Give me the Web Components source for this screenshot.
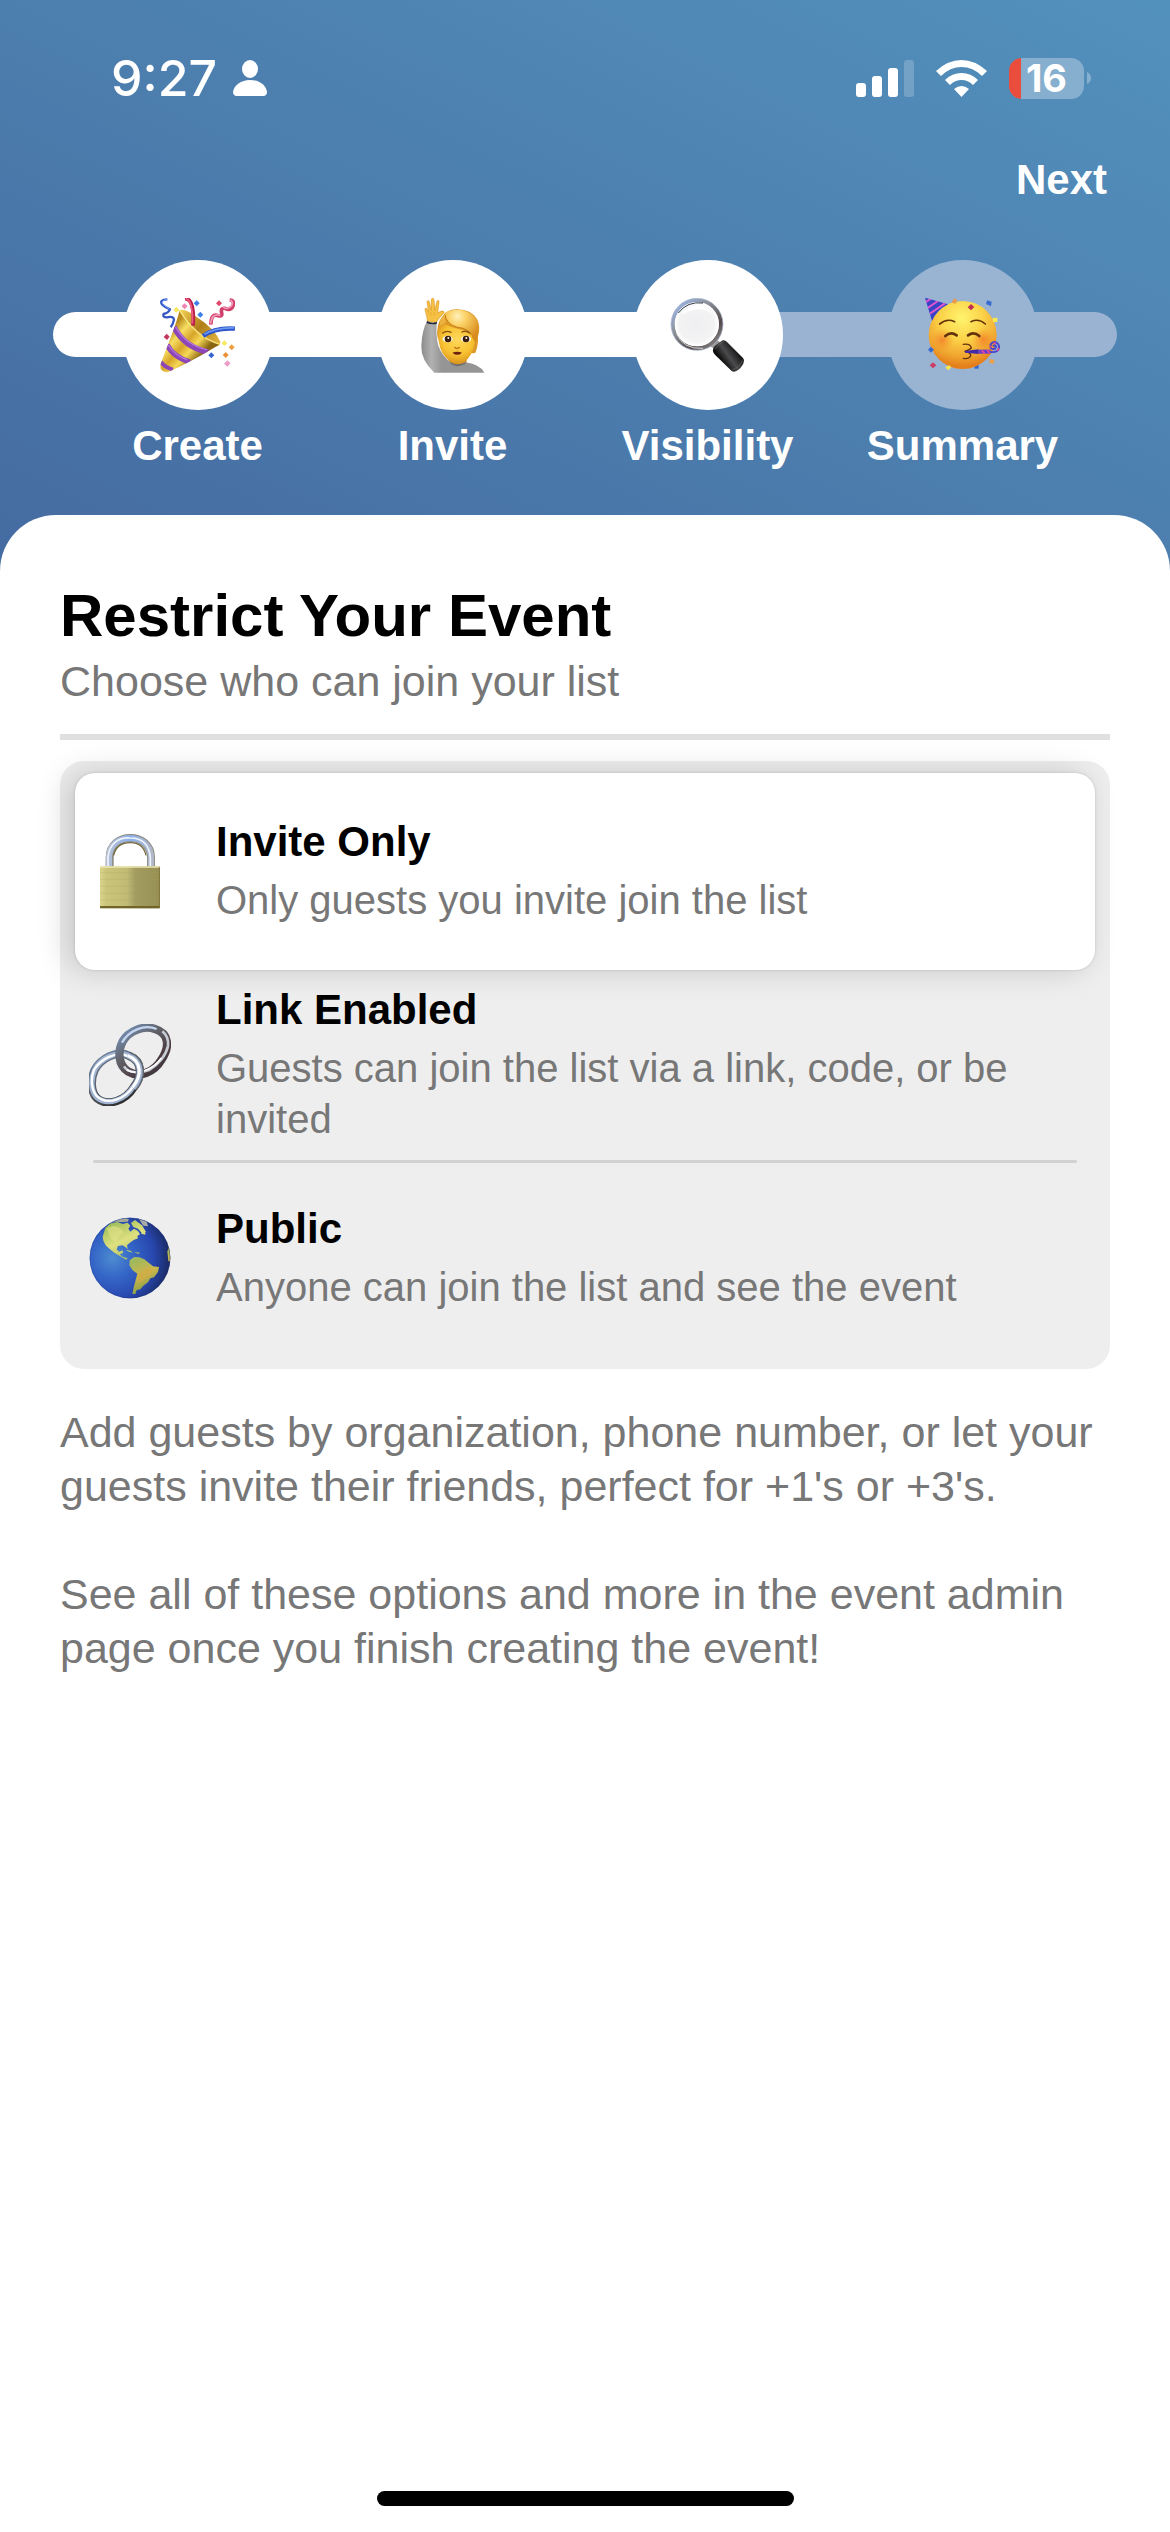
<!DOCTYPE html>
<html lang="en">
<head>
<meta charset="utf-8">
<meta name="viewport" content="width=device-width, initial-scale=1">
<title>Restrict Your Event</title>
<style>
  html, body { margin: 0; background: #fff; }
  body { font-family: "Liberation Sans", Arial, sans-serif; }
</style>
</head>
<body>
<event-page>
  <status-bar slot="header"></status-bar>
  <top-nav slot="header">Next</top-nav>
  <progress-steps slot="header"></progress-steps>
  <section-heading>
    Restrict Your Event
    <span slot="subtitle">Choose who can join your list</span>
  </section-heading>
  <visibility-options></visibility-options>
  <help-text>
    <p>Add guests by organization, phone number, or let your guests invite their friends, perfect for +1's or +3's.</p>
    <p>See all of these options and more in the event admin page once you finish creating the event!</p>
  </help-text>
</event-page>

<script>
const define = (name, html, setup) => customElements.define(name, class extends HTMLElement {
  constructor() {
    super();
    this.attachShadow({ mode: 'open' }).innerHTML = html;
  }
  connectedCallback() { if (setup) setup(this); }
});

const emoji = {
  party: `<svg viewBox="123 145 225 225">
    <defs>
      <linearGradient id="cone" x1="145" y1="250" x2="235" y2="330" gradientUnits="userSpaceOnUse">
        <stop offset="0" stop-color="#b98a1c"/><stop offset=".25" stop-color="#f7de62"/><stop offset=".5" stop-color="#d7a42a"/><stop offset=".72" stop-color="#f6d956"/><stop offset="1" stop-color="#8a6412"/>
      </linearGradient>
      <linearGradient id="in" x1="180" y1="190" x2="300" y2="280" gradientUnits="userSpaceOnUse">
        <stop offset="0" stop-color="#f2cf52"/><stop offset=".5" stop-color="#b07f1a"/><stop offset="1" stop-color="#e2b540"/>
      </linearGradient>
      <clipPath id="c"><path d="M182 182C168 236 140 300 124 346Q122 366 146 368C190 350 250 316 303 284Q230 262 182 182Z"/></clipPath>
    </defs>
    <path d="M182 182Q196 174 230 200Q288 238 304 276Q304 292 284 289Q230 270 192 218Z" fill="url(#in)"/>
    <path d="M182 182C168 236 140 300 124 346Q122 366 146 368C190 350 250 316 303 284Q230 262 182 182Z" fill="url(#cone)"/>
    <g clip-path="url(#c)" fill="none" stroke="#8d46b8">
      <path d="M165 232Q195 292 268 308" stroke-width="17"/>
      <path d="M144 285Q162 322 214 338" stroke-width="16"/>
      <path d="M125 336Q138 354 162 360" stroke-width="12"/>
      <path d="M170 232Q200 286 264 300" stroke="#b87be0" stroke-width="4"/>
      <path d="M148 286Q168 318 204 330" stroke="#b87be0" stroke-width="4"/>
    </g>
    <path d="M182 182Q230 262 303 284" fill="none" stroke="#f9e783" stroke-width="4"/>
    <path d="M198 148Q210 146 216 160Q226 185 222 228" fill="none" stroke="#b81f48" stroke-width="11"/>
    <path d="M200 147Q213 149 217 172Q222 190 220 222" fill="none" stroke="#ef5c80" stroke-width="5"/>
    <path d="M252 259Q288 233 348 237" fill="none" stroke="#2e56c8" stroke-width="13"/>
    <path d="M256 254Q292 233 346 235" fill="none" stroke="#6b97f4" stroke-width="5"/>
    <path d="M145 149Q120 150 129 164Q139 174 153 179Q149 189 134 193Q130 203 143 203Q164 198 165 210Q163 223 155 233" fill="none" stroke="#3458c6" stroke-width="7" stroke-linejoin="round"/>
    <path d="M145 149Q124 153 131 163Q141 173 151 178" fill="none" stroke="#6f98f2" stroke-width="3"/>
    <path d="M332 151Q349 152 341 171Q334 184 318 176Q304 174 308 190Q311 202 298 198Q275 190 276 225" fill="none" stroke="#d0406b" stroke-width="11" stroke-linejoin="round"/>
    <path d="M334 151Q344 157 338 168Q326 181 312 173M304 197Q278 190 275 222" fill="none" stroke="#f39ab9" stroke-width="5"/>
    <g>
      <path d="m172 172 9 8-9 9-9-8z" fill="#f7e95c"/><path d="m196 161 10 8-9 10-9-9z" fill="#ee85b2"/>
      <path d="m233 152 9 9-9 9-9-9z" fill="#3f7fe8"/><path d="m244 186 9 9-9 9-9-9z" fill="#3f7fe8"/>
      <path d="m300 152 9 9-9 9-9-9z" fill="#dc4a6e"/><path d="m143 252 9 9-8 10-10-9z" fill="#c4375e"/>
      <path d="m316 272 9 9-9 8-8-8z" fill="#f7e95c"/><path d="m338 284 9 9-9 9-9-9z" fill="#eda044"/>
      <path d="m320 307 9 9-9 9-9-9z" fill="#e8913b"/><path d="m277 308 9 9-9 9-9-9z" fill="#3465d2"/>
      <path d="m325 332 10 9-10 10-10-9z" fill="#ee9cc8"/>
    </g></svg>`,
  hand: `<svg viewBox="135 145 225 225">
    <defs>
      <radialGradient id="f" cx="262" cy="270" r="75" gradientUnits="userSpaceOnUse"><stop offset="0" stop-color="#ffd85c"/><stop offset=".6" stop-color="#f8c232"/><stop offset="1" stop-color="#d8901c"/></radialGradient>
      <radialGradient id="h" cx="262" cy="200" r="75" gradientUnits="userSpaceOnUse"><stop offset="0" stop-color="#fff0bc"/><stop offset=".35" stop-color="#fbd267"/><stop offset="1" stop-color="#d98d1d"/></radialGradient>
      <linearGradient id="s" x1="155" y1="280" x2="215" y2="280" gradientUnits="userSpaceOnUse"><stop offset="0" stop-color="#8c8c8c"/><stop offset=".5" stop-color="#b1b1b1"/><stop offset="1" stop-color="#959595"/></linearGradient>
    </defs>
    <path d="M172 214Q172 202 165 181Q164 174 170 176L176 188L171 157Q173 149 178 156L184 182L184 149Q188 141 192 149L194 182L201 154Q207 149 207 157L203 190Q210 184 219 184Q226 187 218 194Q204 209 198 219Z" fill="#f6c044" stroke="#dd9a26" stroke-width="2"/>
    <path d="M182 188L183 198M193 188L192 198" stroke="#e0a12c" stroke-width="2"/>
    <path d="M236 318H290V350H236Z" fill="#d99220"/>
    <path d="M171 214Q186 223 201 216Q196 255 205 288Q216 318 242 338Q262 352 285 338Q328 342 343 369H193Q152 330 154 288Q156 242 171 214Z" fill="url(#s)"/>
    <path d="M171 214Q186 223 201 216L200 222Q184 227 170 220Z" fill="#20283c"/>
    <path d="M240 337Q262 351 288 337L284 344Q262 355 244 344Z" fill="#6e6e6e"/>
    <path d="M214 205Q228 178 262 179Q303 180 321 208Q333 231 324 260Q325 287 318 304Q318 313 305 310L230 290Q197 278 202 242Q204 217 214 205Z" fill="#dd9826"/>
    <path d="M204 245Q208 226 224 224Q260 240 306 246Q318 255 314 280Q309 320 281 337Q262 348 242 336Q212 318 206 275Z" fill="url(#f)"/>
    <path d="M224 190Q229 226 262 233Q296 236 304 256Q308 272 318 278Q332 232 318 207Q294 177 252 181Q233 184 224 190Z" fill="url(#h)"/>
    <path d="M224 193Q229 224 262 233Q294 236 303 255" fill="none" stroke="#c57d17" stroke-width="3"/>
    <path d="M226 192Q208 205 209 229Q222 222 229 217Q222 205 226 192Z" fill="#edb342"/>
    <path d="M218 250Q231 241 243 248M276 247Q288 241 299 250" fill="none" stroke="#87500d" stroke-width="4" stroke-linecap="round"/>
    <ellipse cx="233" cy="268" rx="15" ry="10" fill="#fff"/><ellipse cx="288" cy="268" rx="15" ry="10" fill="#fff"/>
    <circle cx="234" cy="268" r="10" fill="#3b1e0d"/><circle cx="288" cy="268" r="10" fill="#3b1e0d"/>
    <circle cx="235" cy="265" r="3" fill="#fff"/><circle cx="289" cy="265" r="3" fill="#fff"/>
    <path d="M253 292Q261 301 269 292" fill="none" stroke="#c0761a" stroke-width="5"/>
    <path d="M247 309Q262 304 276 309Q262 322 247 309Z" fill="#6d230f"/></svg>`,
  glass: `<svg viewBox="123 145 225 225">
    <defs>
      <linearGradient id="r" x1="140" y1="150" x2="270" y2="300" gradientUnits="userSpaceOnUse"><stop offset="0" stop-color="#9ebcf0"/><stop offset=".35" stop-color="#8d9199"/><stop offset=".7" stop-color="#544a4c"/><stop offset="1" stop-color="#9b9b9b"/></linearGradient>
      <linearGradient id="k" x1="268" y1="330" x2="325" y2="290" gradientUnits="userSpaceOnUse"><stop offset="0" stop-color="#000"/><stop offset=".45" stop-color="#4b4b4d"/><stop offset="1" stop-color="#050505"/></linearGradient>
      <radialGradient id="l"><stop offset="0" stop-color="#efeff1"/><stop offset=".8" stop-color="#f3f3f4"/><stop offset="1" stop-color="#fff"/></radialGradient>
    </defs>
    <path d="M240 290L262 270L274 278L256 296Z" fill="#999"/>
    <circle cx="204" cy="224" r="72" fill="none" stroke="url(#r)" stroke-width="12"/>
    <circle cx="204" cy="224" r="78" fill="none" stroke="#a9b5ce" stroke-width="2"/>
    <circle cx="203" cy="223" r="66" fill="url(#l)"/>
    <path d="M148 190Q175 154 222 160" fill="none" stroke="#333b49" stroke-width="3"/>
    <path d="M142 252Q165 300 222 296" fill="none" stroke="#dadada" stroke-width="3"/>
    <path d="M158 195Q175 168 205 164Q234 168 249 193Q220 169 180 185Z" fill="#fff"/>
    <path d="M252 300Q252 290 281 272Q288 270 294 277L342 325Q350 335 336 353Q320 371 308 364L258 315Q250 306 252 300Z" fill="url(#k)"/>
    <path d="M257 299Q272 279 284 276M308 361Q333 354 341 330" fill="none" stroke="#686868" stroke-width="2"/></svg>`,
  face: `<svg viewBox="138 145 225 225">
    <defs>
      <radialGradient id="y" cx="248" cy="205" r="145" gradientUnits="userSpaceOnUse"><stop offset="0" stop-color="#fff46e"/><stop offset=".45" stop-color="#fbd248"/><stop offset=".8" stop-color="#f0a52f"/><stop offset="1" stop-color="#e57f1c"/></radialGradient>
      <radialGradient id="b"><stop offset="0" stop-color="#f36c26" stop-opacity=".65"/><stop offset="1" stop-color="#f38a26" stop-opacity="0"/></radialGradient>
      <clipPath id="t"><path d="M138 144L207 164Q172 182 159 214Z"/></clipPath>
    </defs>
    <path d="M286 346h13v11h-13z" fill="#376ad0"/>
    <circle cx="251" cy="256" r="102" fill="url(#y)"/>
    <circle cx="190" cy="271" r="35" fill="url(#b)"/><circle cx="313" cy="269" r="35" fill="url(#b)"/>
    <path d="M138 144L207 164Q172 182 159 214Z" fill="#3843c6"/>
    <g clip-path="url(#t)" stroke="#e056cf" stroke-width="6"><path d="M137 160L160 144M140 179L181 151M147 196L202 158"/></g>
    <g fill="none" stroke="#63330b" stroke-linecap="round">
      <path d="M182 223Q203 205 227 216M276 216Q299 205 319 223" stroke-width="5"/>
      <path d="M199 259Q216 244 233 257M267 257Q284 244 301 259" stroke-width="8"/>
      <path d="M253 284Q274 281 277 295Q271 301 257 305Q277 309 275 319Q269 329 253 326" stroke-width="4"/>
    </g>
    <path d="M257 304L299 299V313L258 309Z" fill="#422aaa"/>
    <path d="M299 306H334" stroke="#693bd0" stroke-width="12"/><path d="M308 302l9 9M325 301l7 10" stroke="#e44a94" stroke-width="5"/>
    <path d="M333 307Q362 310 360 289Q354 274 341 278Q330 286 337 297Q350 301 351 290Q347 283 342 290" fill="none" stroke="#4a46cc" stroke-width="6"/>
    <path d="M355 303l5-7M344 280l7 1M334 288l1 6" stroke="#e44a94" stroke-width="5"/>
    <path d="m225 146 10 6-5 10-12-3z" fill="#e99a49"/><path d="m276 163 10 9-10 10-10-9z" fill="#bf3152"/>
    <path d="m324 152 14 4-2 14-15-7z" fill="#386bd2"/><path d="m341 205 14-1v13l-13 1z" fill="#f6e94e"/>
    <path d="m155 291 10 9-9 9-9-9z" fill="#386bd2"/><path d="m162 338 10 9-10 9-10-9z" fill="#cc3d65"/>
    <path d="m199 352 12-5 6 6-10 9z" fill="#f6e94e"/><path d="m333 327 14 4-4 12-13-4z" fill="#e9a04f"/></svg>`,
  lock: `<svg viewBox="27 33 246 246">
    <defs>
      <linearGradient id="m" x1="62" y1="0" x2="240" y2="0" gradientUnits="userSpaceOnUse"><stop offset="0" stop-color="#d9d28b"/><stop offset=".1" stop-color="#cbc57a"/><stop offset=".45" stop-color="#c0ba75"/><stop offset=".58" stop-color="#a39d62"/><stop offset="1" stop-color="#979052"/></linearGradient>
      <linearGradient id="n" x1="80" y1="45" x2="220" y2="60" gradientUnits="userSpaceOnUse"><stop offset="0" stop-color="#bcc2ce"/><stop offset=".5" stop-color="#8fb1e8"/><stop offset="1" stop-color="#b1b8c8"/></linearGradient>
    </defs>
    <path d="M89 142V113C89 34 213 34 213 113V142" fill="none" stroke="#8a877c" stroke-width="24"/>
    <path d="M87 142V112C88 35 212 35 213 112V142" fill="none" stroke="url(#n)" stroke-width="19"/>
    <path d="M84 138V112C88 70 116 52 150 54C184 54 208 72 211 113V138" fill="none" stroke="#edf4ff" stroke-width="5"/>
    <path d="M101 106C108 76 130 68 151 68C174 68 192 79 198 106" fill="none" stroke="#756a3e" stroke-width="4"/>
    <rect x="60" y="139" width="180" height="126" rx="3" fill="url(#m)"/>
    <path d="M60 158H240M60 178H240M60 199H240M60 220H240M60 240H240" stroke="#a69f5e" stroke-opacity=".35" stroke-width="2"/>
    <path d="M61 141H239" stroke="#eee9b4" stroke-width="4"/>
    <path d="M60 258H240V265H60Z" fill="#706629"/><path d="M238 142V264" stroke="#81763d" stroke-width="3"/></svg>`,
  link: `<svg viewBox="27 72 246 246">
    <defs>
      <linearGradient id="a" x1="130" y1="75" x2="260" y2="230" gradientUnits="userSpaceOnUse"><stop offset="0" stop-color="#7795c0"/><stop offset=".35" stop-color="#63656d"/><stop offset=".7" stop-color="#4c3c42"/><stop offset="1" stop-color="#38383c"/></linearGradient>
      <linearGradient id="z" x1="50" y1="165" x2="150" y2="315" gradientUnits="userSpaceOnUse"><stop offset="0" stop-color="#6d7f9a"/><stop offset=".5" stop-color="#585b62"/><stop offset="1" stop-color="#232323"/></linearGradient>
    </defs>
    <g fill="none">
      <path d="M44 210C62 176 111 149 146 167C190 184 187 230 161 262C137 301 84 322 51 295C31 275 32 237 44 210Z" stroke="url(#z)" stroke-width="25"/>
      <path d="M44 209C62 176 111 149 146 167C189 184 186 229 160 260C136 299 84 319 51 293C32 274 32 237 44 209Z" stroke="#a2b6d3" stroke-width="16"/>
      <path d="M42 210C60 178 109 151 146 169C188 184 185 228 160 258C136 297 84 317 52 290C34 272 31 237 42 210Z" stroke="#fff" stroke-width="7"/>
      <path d="M128 124C145 94 190 74 225 87C269 100 269 142 245 178C223 216 178 235 145 215C113 195 113 153 128 124Z" stroke="url(#a)" stroke-width="25"/>
      <path d="M126 128C146 92 192 71 230 87" stroke="#c4d6ef" stroke-width="7"/>
      <path d="M132 199C144 219 178 221 207 210C236 194 258 166 264 138Q267 110 247 94" stroke="#c9cdd6" stroke-width="8"/>
      <path d="M140 210C176 229 222 205 244 174" stroke="#fff" stroke-width="5"/>
      <path d="M146 167C190 184 187 230 161 262" stroke="#62666e" stroke-width="25"/>
      <path d="M143 166C190 184 187 230 159 264" stroke="#a2b6d3" stroke-width="17"/>
      <path d="M143 167C188 184 185 228 158 262" stroke="#fff" stroke-width="9"/>
    </g></svg>`,
  globe: `<svg viewBox="27 653 246 246">
    <defs>
      <radialGradient id="o" cx="98" cy="775" r="178" gradientUnits="userSpaceOnUse"><stop offset="0" stop-color="#4d8cd0"/><stop offset=".35" stop-color="#3465c7"/><stop offset=".7" stop-color="#2847ae"/><stop offset="1" stop-color="#182659"/></radialGradient>
      <linearGradient id="g" x1="80" y1="670" x2="180" y2="880" gradientUnits="userSpaceOnUse"><stop offset="0" stop-color="#96ba53"/><stop offset=".3" stop-color="#dfe080"/><stop offset=".6" stop-color="#9fb85c"/><stop offset=".8" stop-color="#cdb64e"/><stop offset="1" stop-color="#8aa145"/></linearGradient>
      <clipPath id="w"><circle cx="150" cy="776" r="121"/></clipPath>
    </defs>
    <circle cx="150" cy="776" r="121" fill="url(#o)"/>
    <g clip-path="url(#w)" fill="url(#g)">
      <path d="M68 712L76 686L92 672L112 668L128 674L143 670L151 679L145 688L151 697L162 688L174 695L180 705L172 710L174 717L160 723L148 732L141 738L143 750L137 744L127 738L114 740L110 750L117 757L128 753L129 761L119 765L128 772L143 777L138 781L121 771L105 762L90 750L77 738L70 724Z"/>
      <path d="M149 783L163 773L178 774L193 780L207 791L219 801L237 803L234 818L222 834L211 837L204 849L190 859L181 870L170 872L166 884L157 884L162 861L168 838L172 823L157 812L148 798Z"/>
      <path d="M99 667L115 659L136 656L147 660L143 667L125 668Z" fill="#a6a997"/><path d="M153 671l12-9 21 16 12 20-9 7-15-17-14-5z"/>
      <path d="M176 658L200 666L204 681L190 679Z" fill="#a7aca5"/>
      <path d="M262 756l8-18 5 48h-10zM184 699l13 3-2 4-11-3zM139 751l14 4 5 5-15-4zM162 758l18 2-5 4z"/>
      <path d="M80 687L102 679L121 687L132 700L116 711L106 727L93 720Z" fill="#e5e38b" opacity=".6"/>
      <path d="M171 829L196 806L219 810L209 830L178 852Z" fill="#d2aa43" opacity=".65"/>
    </g>
    <circle cx="150" cy="776" r="120" fill="none" stroke="#1b3087" stroke-opacity=".5" stroke-width="2"/></svg>`
};

define('emoji-icon', `<style>:host{display:block;flex:none}svg{display:block;width:100%;height:100%}</style><div></div>`,
  el => { el.shadowRoot.querySelector('div').innerHTML = emoji[el.getAttribute('name')]; });

define('event-page', `<style>
  :host{display:flex;flex-direction:column;min-height:100vh}
  header{background:linear-gradient(to top right,#456ba1,#4c7eae 50%,#5391bd);padding-bottom:105px}
  main{flex:1;display:flex;flex-direction:column;margin-top:-60px;padding:67px 60px 26px;border-radius:56px 56px 0 0;background:#fff}
  .home{width:417px;height:15px;border-radius:8px;background:#000;margin:auto auto 0}
  </style><header><slot name="header"></slot></header><main><slot></slot><div class="home"></div></main>`);

define('status-bar', `<style>
  :host{display:flex;align-items:center;justify-content:space-between;height:156px;padding:0 79px 0 111px;color:#fff;font-family:Inter,sans-serif}
  div{display:flex;align-items:center}
  .time{font-size:50px;font-weight:500;line-height:60px;gap:16px}
  .right{gap:22px}
  svg{display:block}
  .battery{gap:3px}
  .cell{width:75px;height:41px;border-radius:13px;justify-content:center;box-sizing:border-box;font-size:38px;font-weight:700;line-height:41px;background:linear-gradient(to right,#eb4d3d 12px,#86aece 12px)}
  </style>
  <div class="time"><span>9:27</span><svg width="34" height="36" viewBox="0 0 34 36" fill="#fff"><ellipse cx="17" cy="9" rx="8" ry="9"/><path d="M0 32C1 25 8 20 17 20s16 5 17 12q0 3-3 4H3q-3-1-3-4z"/></svg></div>
  <div class="right">
    <svg width="58" height="38" viewBox="0 0 58 38" fill="#fff"><rect y="24" width="10" height="14" rx="3"/><rect x="16" y="17" width="10" height="21" rx="3"/><rect x="32" y="9" width="10" height="29" rx="3"/><rect x="48" y="1" width="10" height="37" rx="3" opacity=".2"/></svg>
    <svg width="51" height="38" viewBox="0 0 51 38" fill="#fff"><path d="M0 12Q12 1 25.500 1T51 12L46 17Q37 8 25.500 8T5 17Z"/><path d="M9 21Q16 14 25.500 14T42 21L37 26Q32 21 25.500 21T14 26Z"/><path d="M18 30Q25.500 24 33 30L25.500 38Z"/></svg>
    <div class="battery"><div class="cell">16</div><svg width="4" height="12" viewBox="0 0 4 12"><path d="M0 0Q4 2 4 6T0 12Z" fill="#86aece"/></svg></div>
  </div>`);

define('top-nav', `<style>
  :host{display:flex;justify-content:flex-end;padding:0 63px;margin-bottom:56px}
  button{border:0;padding:0;background:none;color:#fff;font:bold 42px/48px "Liberation Sans",Arial,sans-serif}
  </style><button type="button"><slot></slot></button>`);

define('progress-steps', `<style>
  :host{display:grid;color:#fff;font-size:42px;font-weight:700;line-height:48px}
  .track,ol{grid-area:1/1}
  .track{height:45px;margin:52px 53px 0;border-radius:23px;background:linear-gradient(to right,#fff 64%,#9ab3d2 64%)}
  ol{display:grid;grid-template-columns:repeat(4,1fr);list-style:none;margin:0;padding:0 80px 0 70px}
  li{display:flex;flex-direction:column;align-items:center;gap:12px}
  .disc{display:flex;align-items:center;justify-content:center;width:150px;height:150px;border-radius:50%;background:#fff}
  .todo .disc{background:#99b3d2}
  emoji-icon{width:75px;height:75px}
  </style><div class="track"></div><ol>
  <li><div class="disc"><emoji-icon name="party"></emoji-icon></div>Create</li>
  <li><div class="disc"><emoji-icon name="hand"></emoji-icon></div>Invite</li>
  <li aria-current="step"><div class="disc"><emoji-icon name="glass"></emoji-icon></div>Visibility</li>
  <li class="todo"><div class="disc"><emoji-icon name="face"></emoji-icon></div>Summary</li></ol>`);

define('section-heading', `<style>
  :host{display:block;padding-bottom:27px;border-bottom:6px solid #e0e0e0;margin-bottom:21px}
  h1{margin:0 0 5px;font-size:60px;line-height:68px;color:#000}
  p{margin:0;font-size:43px;line-height:52px;color:#777}
  </style><h1><slot></slot></h1><p><slot name="subtitle"></slot></p>`);

define('visibility-options', `<style>
  :host{display:block}
  fieldset{min-width:0;border:0;margin:0;padding:12px 15px 16px;border-radius:24px;background:#eee}
  label{display:flex;align-items:center;gap:45px;position:relative;min-height:190px;padding:0 14px;border-radius:20px}
  label:has(:checked){min-height:197px;background:#fff;box-shadow:-8px 0 30px rgba(0,0,0,.17),0 0 3px rgba(0,0,0,.15)}
  input{appearance:none;position:absolute;inset:0;margin:0;border-radius:20px;outline:0}
  emoji-icon{width:82px;height:82px}
  .text{display:flex;flex-direction:column;gap:8px}
  b{font-size:42px;line-height:50px;color:#000}
  .desc{font-size:40px;line-height:51px;color:#777}
  hr{height:3px;border:0;margin:0 18px;border-radius:2px;background:#d0d1d2}
  </style><fieldset aria-label="Who can join">
  <label><input type="radio" name="who" checked><emoji-icon name="lock"></emoji-icon><span class="text"><b>Invite Only</b><span class="desc">Only guests you invite join the list</span></span></label>
  <label><input type="radio" name="who"><emoji-icon name="link"></emoji-icon><span class="text"><b>Link Enabled</b><span class="desc">Guests can join the list via a link, code, or be invited</span></span></label>
  <hr>
  <label><input type="radio" name="who"><emoji-icon name="globe"></emoji-icon><span class="text"><b>Public</b><span class="desc">Anyone can join the list and see the event</span></span></label>
  </fieldset>`);

define('help-text', `<style>
  :host{display:flex;flex-direction:column;gap:54px;margin-top:36px;font-size:43px;line-height:54px;color:#777}
  ::slotted(p){margin:0}
  </style><slot></slot>`);
</script>
</body>
</html>
